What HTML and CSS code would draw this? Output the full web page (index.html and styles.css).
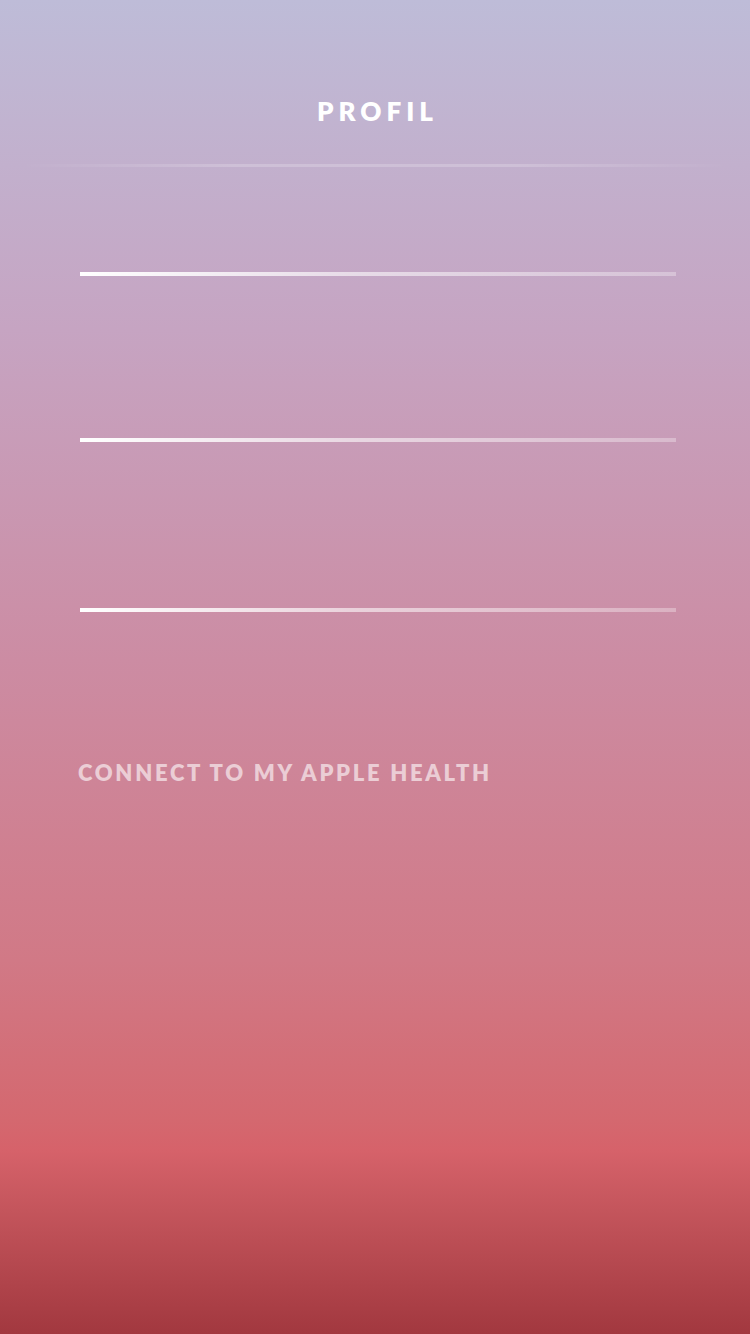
FILE: index.html
```html
<!DOCTYPE html>
<html lang="en">
<head>
<meta charset="utf-8">
<title>Profil</title>
<link rel="stylesheet" href="styles.css">
</head>
<body>
<main class="screen">
  <header class="header">
    <h1 class="title">PROFIL</h1>
  </header>
  <div class="divider"></div>
  <section class="form">
    <div class="field field-first"><div class="field-line"></div></div>
    <div class="field"><div class="field-line"></div></div>
    <div class="field field-last"><div class="field-line"></div></div>
  </section>
  <a class="connect">CONNECT TO MY APPLE HEALTH</a>
</main>
</body>
</html>
```

FILE: styles.css
```css
html, body {
  margin: 0;
  padding: 0;
}
body {
  width: 750px;
  height: 1334px;
  overflow: hidden;
  font-family: Lato, "Open Sans", "DejaVu Sans", sans-serif;
}
.screen {
  width: 750px;
  height: 1334px;
  display: flex;
  flex-direction: column;
  background: linear-gradient(to bottom,
    #bebcd8 0px,
    #c6a4c2 330px,
    #cc8ca3 660px,
    #d17986 960px,
    #d4686f 1120px,
    #d6626a 1150px,
    #c4555c 1210px,
    #a2383f 1334px);
}
.header {
  padding-top: 98px;
  padding-left: 5px;
  display: flex;
  justify-content: center;
}
.title {
  margin: 0;
  font-size: 26px;
  line-height: 26px;
  font-weight: 800;
  letter-spacing: 5px;
  color: #ffffff;
}
.divider {
  margin: 40px 20px 0;
  height: 3px;
  background: linear-gradient(to right,
    rgba(255,255,255,0) 0%,
    rgba(255,255,255,0.2) 30%,
    rgba(255,255,255,0.2) 70%,
    rgba(255,255,255,0) 100%);
}
.form {
  display: flex;
  flex-direction: column;
  padding: 0 74px 0 80px;
}
.field {
  padding-top: 162px;
}
.field-first {
  padding-top: 105px;
}
.field-last {
  padding-top: 166px;
}
.field-line {
  height: 4px;
  background: linear-gradient(to right,
    #ffffff 0%,
    rgba(255,255,255,0.6) 45%,
    rgba(255,255,255,0.3) 100%);
}
.connect {
  margin: 150px 0 0 78px;
  font-size: 22px;
  line-height: 22px;
  font-weight: 800;
  letter-spacing: 2.7px;
  color: rgba(255,255,255,0.6);
  align-self: flex-start;
}
```
